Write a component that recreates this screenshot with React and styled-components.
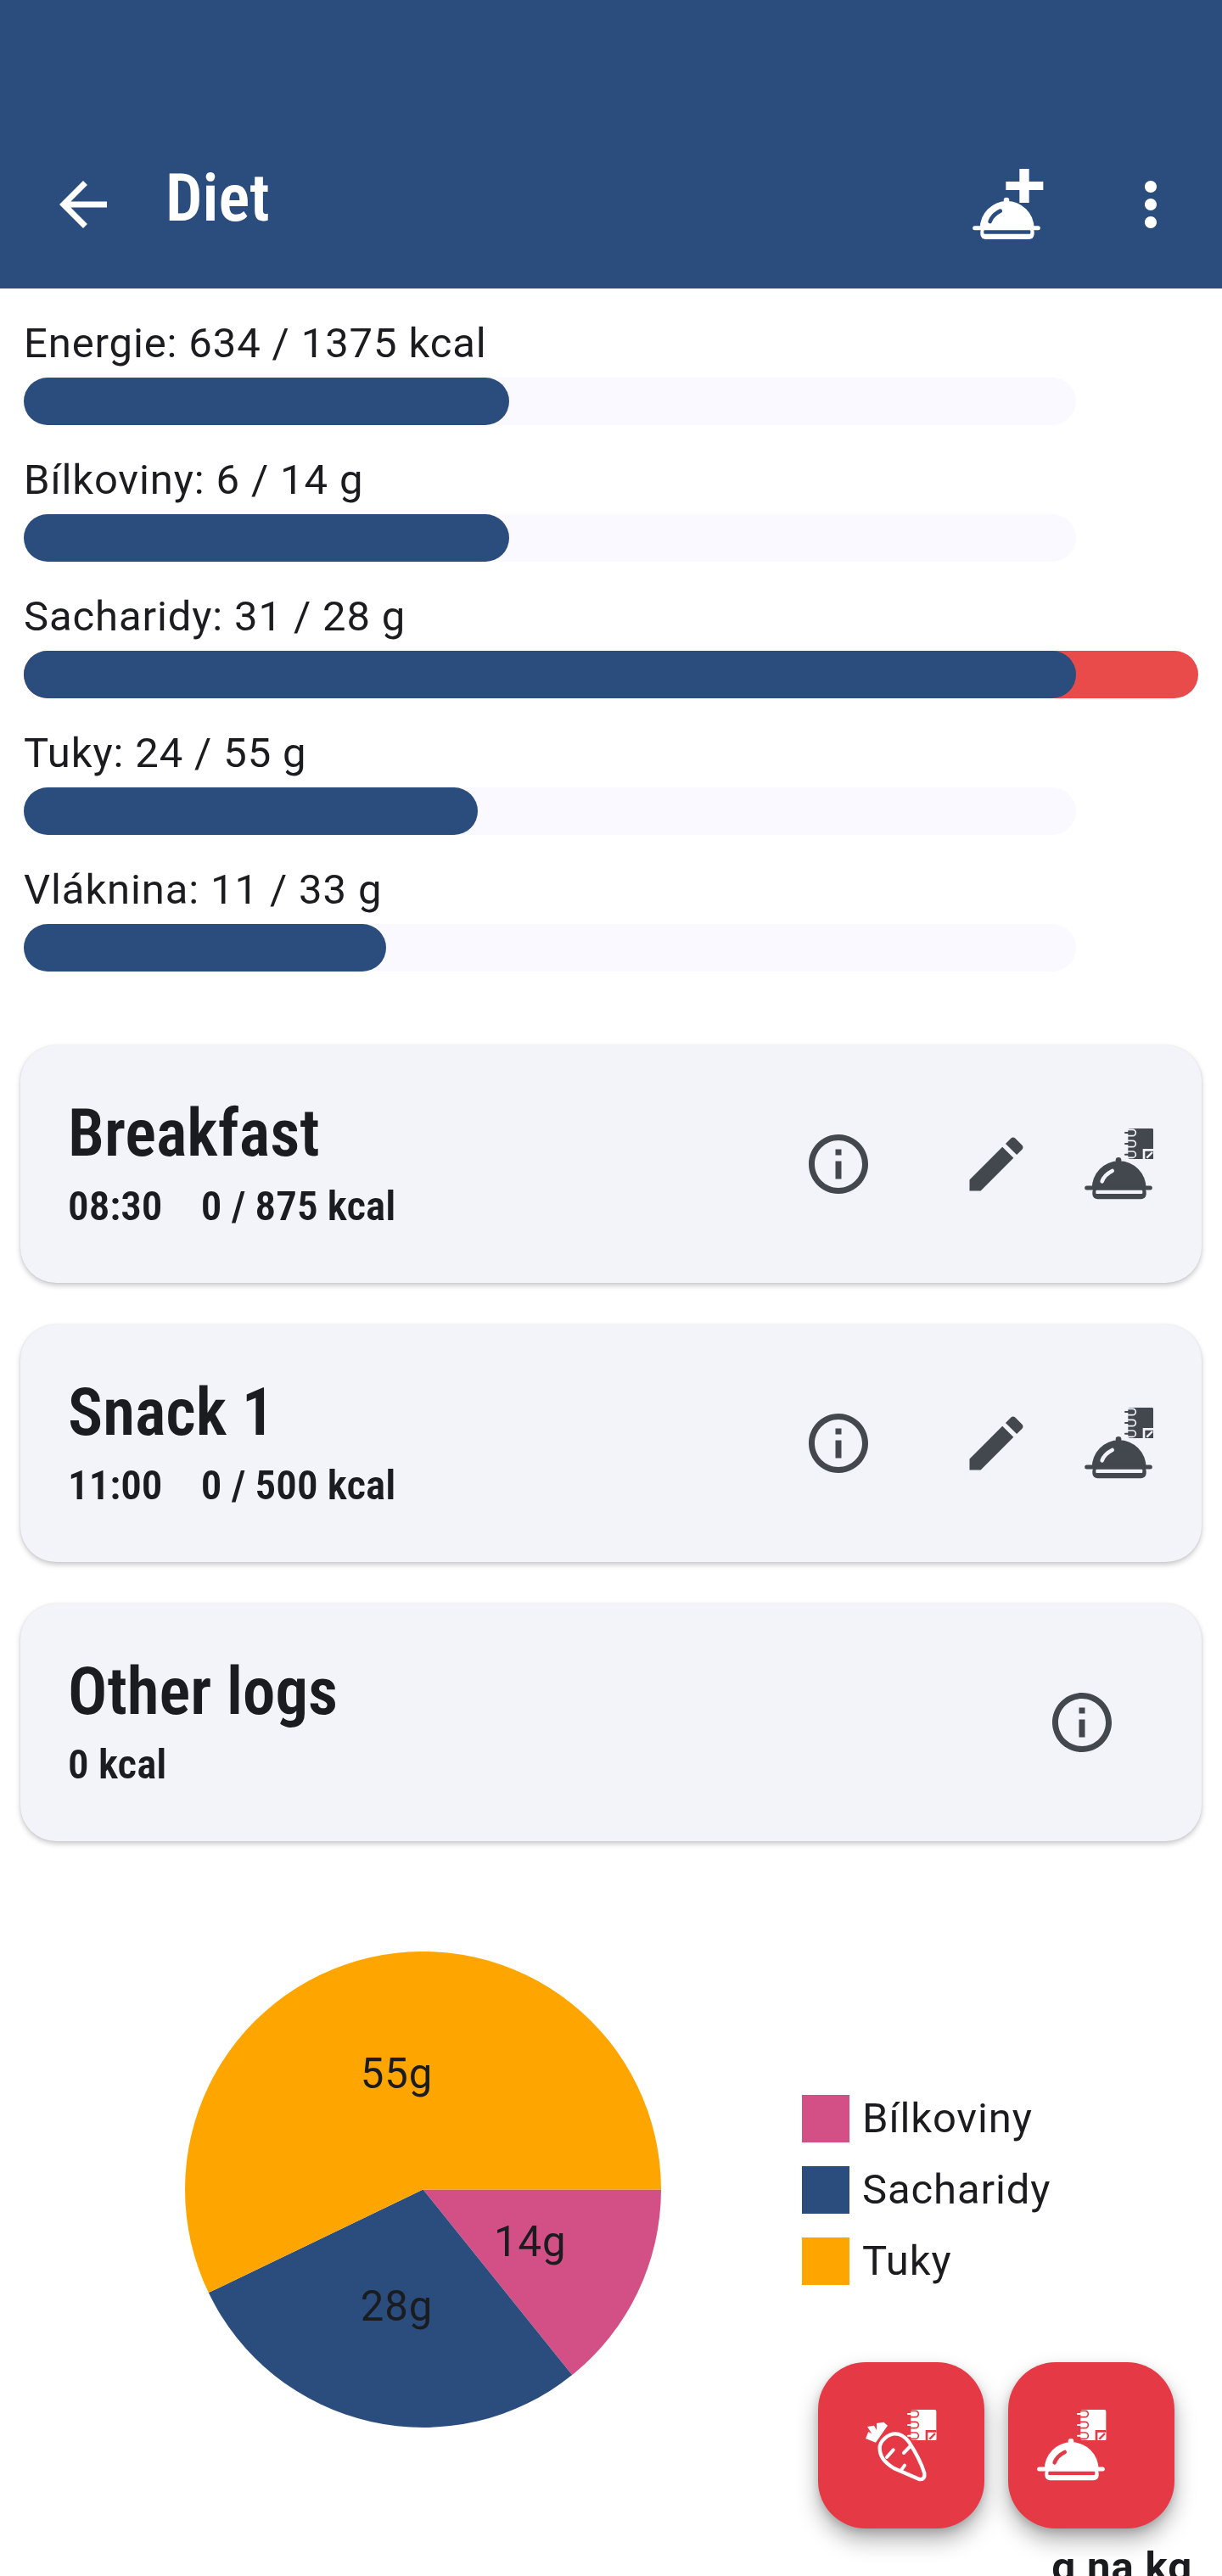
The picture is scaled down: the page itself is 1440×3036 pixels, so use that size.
import React from "react";
import styled, { createGlobalStyle } from "styled-components";

const BLUE = "#2b4d7e";
const RED = "#e63946";
const CARD = "#f3f4f9";
const ICON = "#43474e";
const INK = "#1a1c20";

const GlobalStyle = createGlobalStyle`
  html, body { margin: 0; padding: 0; background: #fff; }
  body { font-family: Roboto, "Liberation Sans", sans-serif; color: ${INK}; }
`;

const Page = styled.div`
  position: relative;
  width: 1440px;
  height: 3036px;
  overflow: hidden;
  background: #fff;
`;

const AppBar = styled.header`
  height: 340px;
  background: ${BLUE};
  display: flex;
  align-items: flex-start;
  padding: 199px 42px 0 56px;
  box-sizing: border-box;
  color: #fff;
`;

const BarTitle = styled.h1`
  margin: -12px 0 0 55px;
  flex: 1;
  font-size: 77px;
  line-height: 94px;
  font-weight: 600;
  font-stretch: 75%;
`;

const BarAction = styled.div`
  width: 84px;
  height: 84px;
  margin-left: ${(p) => p.$gap || 0}px;
  display: flex;
  align-items: center;
  justify-content: center;
`;

const Goals = styled.section`
  padding: 24px 28px 0;
  display: flex;
  flex-direction: column;
`;

const Goal = styled.div`
  height: 161px;
`;

const GoalLabel = styled.div`
  font-size: 49px;
  letter-spacing: 0.875px;
  line-height: 81px;
  height: 81px;
`;

const Track = styled.div`
  position: relative;
  width: ${(p) => (p.$over ? 1384 : 1240)}px;
  height: 56px;
  border-radius: 28px;
  background: ${(p) => (p.$over ? "#e94b4b" : "#f9f9ff")};
`;

const Fill = styled.div`
  height: 100%;
  border-radius: 28px;
  background: ${BLUE};
`;

const Meals = styled.section`
  margin-top: 63px;
  padding: 0 24px;
  display: flex;
  flex-direction: column;
  gap: 49px;
`;

const MealCard = styled.article`
  height: 280px;
  box-sizing: border-box;
  padding: 0 57px 0 56px;
  background: ${CARD};
  border-radius: 42px;
  box-shadow: 0 3px 6px rgba(0, 0, 0, 0.22), 0 0 2px rgba(0, 0, 0, 0.08);
  display: flex;
  align-items: center;
`;

const MealText = styled.div`
  flex: 1;
  margin-top: -4px;
`;

const MealName = styled.h2`
  margin: 0;
  font-size: 77px;
  line-height: 90px;
  font-weight: 600;
  font-stretch: 75%;
`;

const MealMeta = styled.div`
  margin-top: 14px;
  font-size: 49px;
  line-height: 54px;
  font-weight: 600;
  font-stretch: 75%;
  white-space: pre;
`;

const IconSlot = styled.div`
  flex: none;
  display: flex;
  margin-left: ${(p) => p.$gap || 0}px;
  margin-right: ${(p) => p.$end || 0}px;
`;

const ChartRow = styled.section`
  display: flex;
  align-items: center;
  margin-top: 130px;
  padding-left: 218px;
`;

const ChartLabels = styled.g`
  font-family: Roboto, sans-serif;
  font-size: 49px;
  letter-spacing: 0.875px;
  fill: ${INK};
  text-anchor: middle;
`;

const Legend = styled.ul`
  list-style: none;
  margin: 0 0 0 166px;
  padding: 0;
  display: flex;
  flex-direction: column;
  gap: 28px;
`;

const LegendItem = styled.li`
  display: flex;
  align-items: center;
  gap: 15px;
  font-size: 49px;
  letter-spacing: 0.875px;
  line-height: 56px;
`;

const Swatch = styled.span`
  width: 56px;
  height: 56px;
  background: ${(p) => p.$color};
`;

const SectionTitle = styled.h3`
  margin: 135px 35px 0 0;
  text-align: right;
  font-size: 49px;
  letter-spacing: 0.875px;
  line-height: 60px;
  font-weight: 700;
`;

const FabRow = styled.div`
  position: absolute;
  left: 964px;
  top: 2784px;
  display: flex;
  gap: 28px;
`;

const Fab = styled.button`
  width: 196px;
  height: 196px;
  padding: 0;
  border: 0;
  border-radius: 56px;
  background: ${RED};
  box-shadow: 0 14px 26px rgba(0, 0, 0, 0.3), 0 4px 10px rgba(0, 0, 0, 0.14);
  display: block;
`;

const FabIcon = styled.svg`
  display: block;
`;

// 240x150 units, same cloche everywhere in the app
const Dish = ({ color, bg, ...rest }) => (
  <g {...rest}>
    <circle cx="120" cy="12" r="10" fill={color} />
    <path d="M26 112A96 97 0 0 1 218 112Z" fill={color} />
    <path d="M8 110H232" stroke={color} strokeWidth="15" strokeLinecap="round" />
    <rect x="28" y="106" width="190" height="44" rx="18" fill={color} />
    <rect x="40" y="118" width="165" height="13" rx="3" fill={bg} />
    <path d="M62 87C68 70 82 58 98 50" stroke={bg} strokeWidth="14" strokeLinecap="round" fill="none" />
  </g>
);

// 100x108 units
const Notebook = ({ color, bg, ...rest }) => (
  <g {...rest}>
    <rect x="10" y="0" width="90" height="108" rx="6" fill={color} />
    {[15, 54, 92].map((y) => (
      <g key={y}>
        <path d={`M4 ${y - 11}H26A11 11 0 0 1 26 ${y + 11}H4`} stroke={bg} strokeWidth="5" fill="none" />
        <path d={`M0 ${y}H30`} stroke={color} strokeWidth="6" strokeLinecap="round" />
      </g>
    ))}
    <rect x="62" y="72" width="38" height="36" fill={bg} />
    <rect x="70" y="80" width="30" height="28" rx="2" fill={color} />
    <path d="M76 104L96 84" stroke={bg} strokeWidth="7" />
  </g>
);

const Carrot = ({ color }) => (
  <g>
    <path d="M240 342L250 318L262 325L246 300L270 296L279 312L279 288L304 284L318 296L276 356Z" fill={color} />
    <path
      d="M345 325C320 325 290 350 290 375C290 405 305 425 340 447L430 486C445 488 450 478 448 465C438 430 420 395 392 352C378 335 360 325 345 325Z"
      stroke={color}
      strokeWidth="13"
      fill="none"
      strokeLinejoin="round"
    />
    <path d="M315 408L338 382M375 393L400 367M365 455L378 437" stroke={color} strokeWidth="12" strokeLinecap="round" />
  </g>
);

const Icon24 = ({ d, color = ICON, size = 84 }) => (
  <svg width={size} height={size} viewBox="0 0 24 24">
    <path d={d} fill={color} />
  </svg>
);

const INFO = "M11 7h2v2h-2zm0 4h2v6h-2zm1-9C6.48 2 2 6.48 2 12s4.48 10 10 10 10-4.48 10-10S17.52 2 12 2zm0 18c-4.41 0-8-3.59-8-8s3.59-8 8-8 8 3.59 8 8-3.59 8-8 8z";
const EDIT = "M3 17.25V21h3.75L17.81 9.94l-3.75-3.75L3 17.25zM20.71 7.04c.39-.39.39-1.02 0-1.41l-2.34-2.34c-.39-.39-1.02-.39-1.41 0l-1.83 1.83 3.75 3.75 1.83-1.83z";
const BACK = "M20 11H7.83l5.59-5.59L12 4l-8 8 8 8 1.41-1.41L7.83 13H20v-2z";
const MORE = "M12 8c1.1 0 2-.9 2-2s-.9-2-2-2-2 .9-2 2 .9 2 2 2zm0 2c-1.1 0-2 .9-2 2s.9 2 2 2 2-.9 2-2-.9-2-2-2zm0 6c-1.1 0-2 .9-2 2s.9 2 2 2 2-.9 2-2-.9-2-2-2z";

const DishNoteIcon = () => (
  <svg width="82" height="84" viewBox="0 0 246 252">
    <Notebook color={ICON} bg={CARD} transform="translate(147 0)" />
    <Dish color={ICON} bg={CARD} transform="translate(3 100)" />
  </svg>
);

const AddDishIcon = () => (
  <svg width="84" height="84" viewBox="0 0 252 252">
    <path d="M166 0H200V45H250V75H200V120H166V75H118V45H166Z" fill="#fff" />
    <Dish color="#fff" bg={BLUE} transform="translate(0 99)" />
  </svg>
);

const goals = [
  { label: "Energie: 634 / 1375 kcal", width: 572 },
  { label: "Bílkoviny: 6 / 14 g", width: 572 },
  { label: "Sacharidy: 31 / 28 g", width: 1240, over: true },
  { label: "Tuky: 24 / 55 g", width: 535 },
  { label: "Vláknina: 11 / 33 g", width: 427 },
];

const meals = [
  { name: "Breakfast", meta: "08:30    0 / 875 kcal" },
  { name: "Snack 1", meta: "11:00    0 / 500 kcal" },
];

const slices = [
  { d: "M280 280L560 280A280 280 0 0 1 455.4 498.2Z", color: "#d35087" },
  { d: "M280 280L455.4 498.2A280 280 0 0 1 27.7 401.4Z", color: BLUE },
  { d: "M280 280L27.7 401.4A280 280 0 1 1 560 280Z", color: "#ffa500" },
];

const legend = [
  { label: "Bílkoviny", color: "#d35087" },
  { label: "Sacharidy", color: BLUE },
  { label: "Tuky", color: "#ffa500" },
];

export default function App() {
  return (
    <Page>
      <GlobalStyle />
      <AppBar>
        <Icon24 d={BACK} color="#fff" />
        <BarTitle>Diet</BarTitle>
        <BarAction>
          <AddDishIcon />
        </BarAction>
        <BarAction $gap={84}>
          <Icon24 d={MORE} color="#fff" />
        </BarAction>
      </AppBar>

      <Goals>
        {goals.map((g) => (
          <Goal key={g.label}>
            <GoalLabel>{g.label}</GoalLabel>
            <Track $over={g.over}>
              <Fill style={{ width: g.width }} />
            </Track>
          </Goal>
        ))}
      </Goals>

      <Meals>
        {meals.map((m) => (
          <MealCard key={m.name}>
            <MealText>
              <MealName>{m.name}</MealName>
              <MealMeta>{m.meta}</MealMeta>
            </MealText>
            <IconSlot>
              <Icon24 d={INFO} />
            </IconSlot>
            <IconSlot $gap={102}>
              <Icon24 d={EDIT} />
            </IconSlot>
            <IconSlot $gap={61}>
              <DishNoteIcon />
            </IconSlot>
          </MealCard>
        ))}
        <MealCard>
          <MealText>
            <MealName>Other logs</MealName>
            <MealMeta>0 kcal</MealMeta>
          </MealText>
          <IconSlot $end={42}>
            <Icon24 d={INFO} />
          </IconSlot>
        </MealCard>
      </Meals>

      <ChartRow>
        <svg width="561" height="561" viewBox="0 0 560 560">
          {slices.map((s) => (
            <path key={s.color} d={s.d} fill={s.color} />
          ))}
          <ChartLabels>
            <text x="249" y="161">55g</text>
            <text x="406" y="358">14g</text>
            <text x="249" y="434">28g</text>
          </ChartLabels>
        </svg>
        <Legend>
          {legend.map((l) => (
            <LegendItem key={l.label}>
              <Swatch $color={l.color} />
              {l.label}
            </LegendItem>
          ))}
        </Legend>
      </ChartRow>

      <SectionTitle>g na kg</SectionTitle>

      <FabRow>
        <Fab>
          <FabIcon width="196" height="196" viewBox="72 72 588 588">
            <Carrot color="#fff" />
            <Notebook color="#fff" bg={RED} transform="translate(390 240)" />
          </FabIcon>
        </Fab>
        <Fab>
          <FabIcon width="196" height="196" viewBox="72 72 588 588">
            <Notebook color="#fff" bg={RED} transform="translate(318 240)" />
            <Dish color="#fff" bg={RED} transform="translate(174 340)" />
          </FabIcon>
        </Fab>
      </FabRow>
    </Page>
  );
}
